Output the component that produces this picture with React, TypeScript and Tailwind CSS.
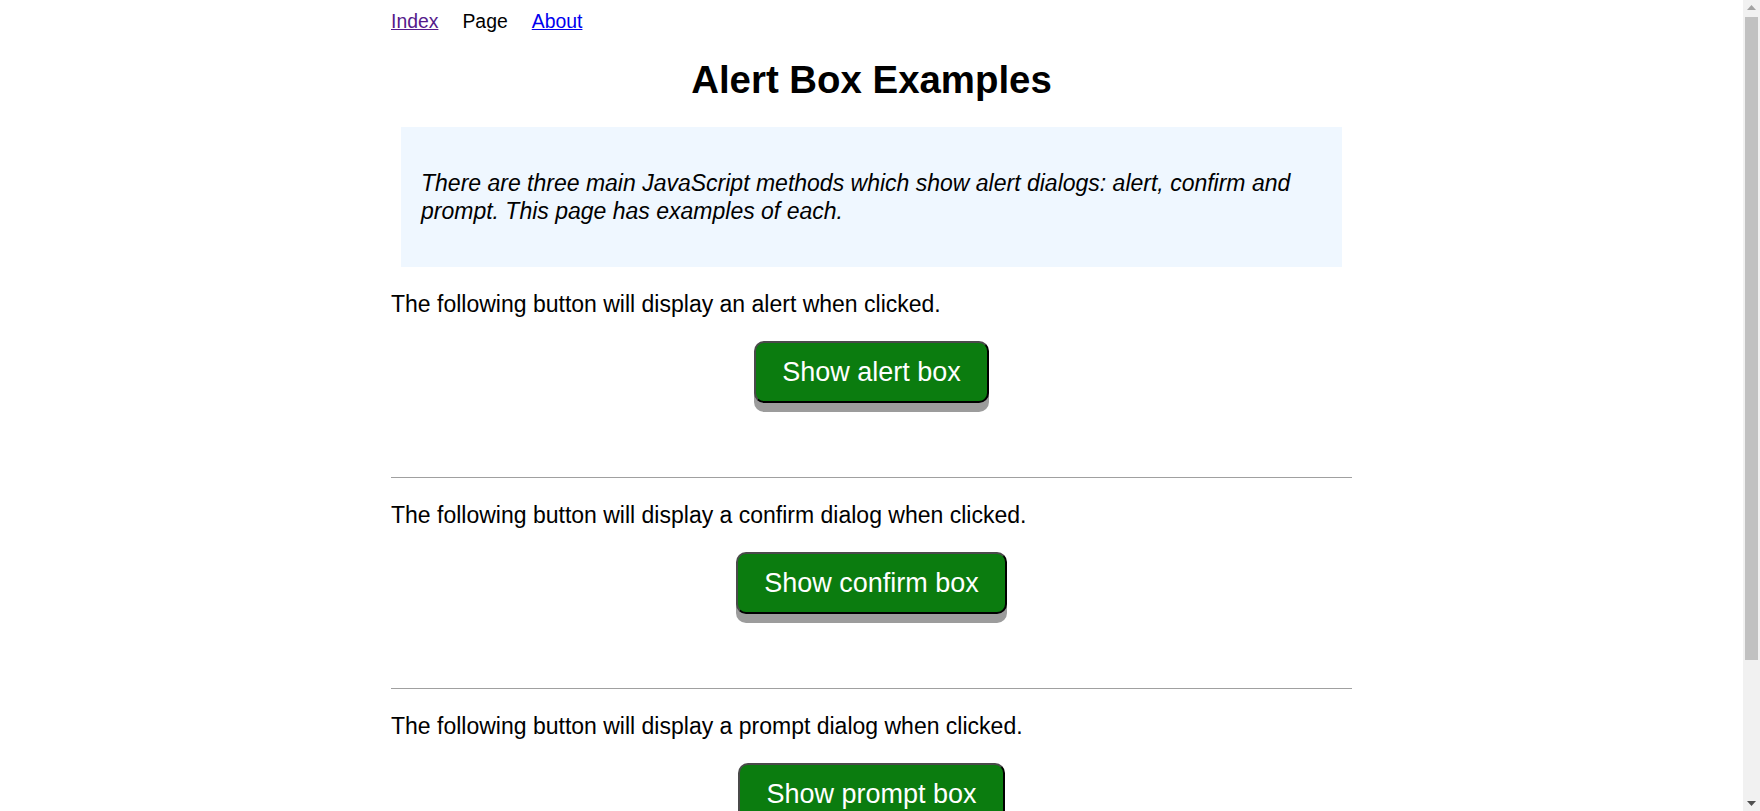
import React from 'react'

const SECTIONS = [
  { text: 'The following button will display an alert when clicked.', label: 'Show alert box', kind: 'alert' },
  { text: 'The following button will display a confirm dialog when clicked.', label: 'Show confirm box', kind: 'confirm' },
  { text: 'The following button will display a prompt dialog when clicked.', label: 'Show prompt box', kind: 'prompt' },
] as const

function DemoButton({ label, onClick }: { label: string; onClick: () => void }) {
  return (
    <button
      type="button"
      onClick={onClick}
      className="rounded-[10px] border-2 border-[#4a4a4a] border-r-black border-b-black bg-[#0b7c0f] px-[26px] py-[12px] text-[27px] leading-[34px] text-white shadow-[0_9px_0_#9c9c9c]"
    >
      {label}
    </button>
  )
}

// fake browser scrollbar seen in the screenshot
function Scrollbar() {
  return (
    <div className="flex w-[17px] shrink-0 flex-col items-center bg-[#f1f1f1]">
      <svg width="9" height="5" viewBox="0 0 9 5" className="mt-[5px]">
        <path d="M4.5 0 L9 5 L0 5 Z" fill="#a3a3a3" />
      </svg>
      <div className="mt-[7px] h-[643px] w-[13px] bg-[#c1c1c1]" />
      <div className="flex-1" />
      <svg width="9" height="5" viewBox="0 0 9 5" className="mb-[5px]">
        <path d="M0 0 L9 0 L4.5 5 Z" fill="#505050" />
      </svg>
    </div>
  )
}

export default function App() {
  const handle = (kind: string) => {
    if (kind === 'alert') window.alert('Hello!')
    else if (kind === 'confirm') window.confirm('Are you sure?')
    else window.prompt('Enter a value')
  }

  return (
    <div className="flex h-screen overflow-hidden bg-white font-['Liberation_Sans',Arial,sans-serif] text-black">
      <main className="min-w-0 flex-1 overflow-hidden">
        <div className="mx-auto max-w-[961px] pb-16">
          {/* nav */}
          <nav className="flex gap-[24px] pt-[10px] text-[19.4px] leading-[22px]">
            <a href="#" className="text-[#551a8b] underline">Index</a>
            <span>Page</span>
            <a href="#" className="text-[#0000ee] underline">About</a>
          </nav>

          <h1 className="mt-[26px] text-center text-[38.4px] font-bold leading-[44px]">Alert Box Examples</h1>

          <div className="mx-[10px] mt-[25px] bg-[#eff7ff] px-5 py-[42px]">
            <p className="text-[23px] italic leading-[28px]">
              There are three main JavaScript methods which show alert dialogs: alert, confirm and prompt. This page
              has examples of each.
            </p>
          </div>

          {SECTIONS.map((s, i) => (
            <div key={s.kind}>
              {i > 0 && <hr className="mt-[74px] border-t border-[#a0a0a0]" />}
              <p className="mt-[24px] text-[23px] leading-[26px]">{s.text}</p>
              <div className="mt-[24px] flex justify-center">
                <DemoButton label={s.label} onClick={() => handle(s.kind)} />
              </div>
            </div>
          ))}
        </div>
      </main>
      <Scrollbar />
    </div>
  )
}
